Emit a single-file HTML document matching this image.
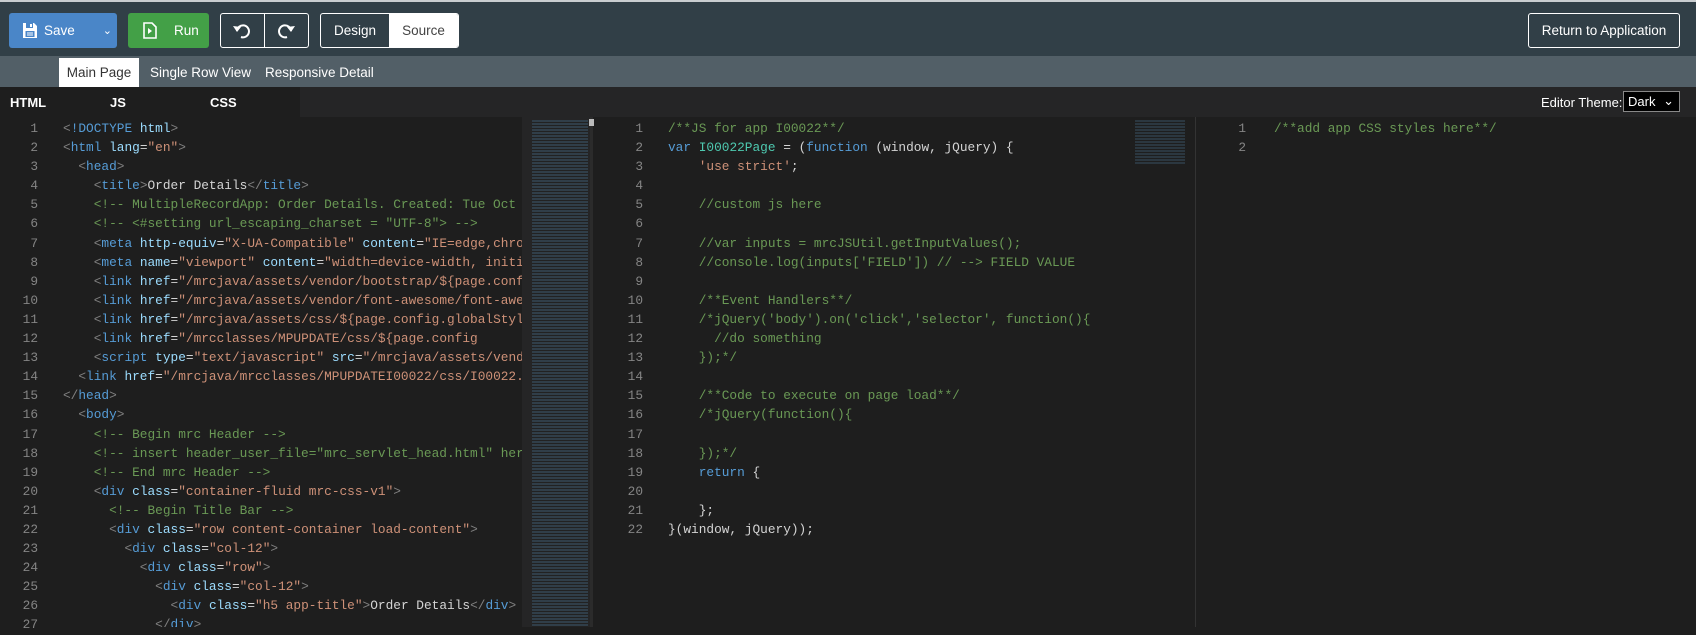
<!DOCTYPE html>
<html><head><style>
*{margin:0;padding:0;box-sizing:border-box}
body{width:1696px;height:627px;overflow:hidden;background:#1e1e1e;font-family:"Liberation Sans",sans-serif;position:relative}
.top{position:absolute;left:0;top:0;width:1696px;height:56px;background:#313f47;border-top:2px solid #c9cdd0}
.btn{position:absolute;top:11px;height:35px;border-radius:3px;color:#fff;font-size:13.5px;display:flex;align-items:center}
.tabs{position:absolute;left:0;top:56px;width:1696px;height:31px;background:#525f67}
.tab{position:absolute;top:2px;height:29px;line-height:29px;font-size:13.5px;color:#fff}
.eh{position:absolute;left:0;top:87px;width:1696px;height:30px;background:#252526}
.code{position:absolute;font-family:"Liberation Mono",monospace;font-size:12.8px;line-height:19.1px;white-space:pre;color:#d4d4d4}
.ln{position:absolute;font-family:"Liberation Mono",monospace;font-size:12.8px;line-height:19.1px;white-space:pre;color:#858585;text-align:right}
.c{color:#6a9955}.t{color:#569cd6}.a{color:#9cdcfe}.s{color:#ce9178}.g{color:#808080}.k{color:#569cd6}.y{color:#4ec9b0}
.mm{position:absolute;background:repeating-linear-gradient(180deg,#3e5d74 0 2px,#1e1e1e 2px 3px)}
</style></head><body>
<div class="top">
 <div class="btn" style="left:9px;width:108px;background:#4a86c8;padding-left:13px">
  <svg width="16" height="17" viewBox="0 0 16 17"><path d="M1 1h11l3 3v12H1z" fill="#fff"/><rect x="4" y="1" width="7" height="5" fill="#4a86c8"/><rect x="8" y="2" width="2" height="3" fill="#fff"/><rect x="3.5" y="9" width="9" height="6" fill="#4a86c8"/><path d="M5 11h6M5 13h6" stroke="#fff"/></svg>
  <span style="margin-left:6px">Save</span><span style="margin-left:28px;font-size:11px">&#8964;</span></div>
 <div class="btn" style="left:128px;width:81px;background:#43a047;padding-left:15px">
  <svg width="14" height="17" viewBox="0 0 14 17"><path d="M1 1h8l4 4v11H1z" fill="none" stroke="#fff" stroke-width="1.6"/><path d="M5 6l4 3-4 3z" fill="#fff"/></svg>
  <span style="margin-left:17px">Run</span></div>
 <div class="btn" style="left:220px;width:89px;border:1px solid #fff">
  <div style="width:44px;height:100%;border-right:1px solid #fff;display:flex;align-items:center;justify-content:center"><svg width="18" height="16" viewBox="0 0 18 16"><path d="M4 8a6 6 0 1 1 4 6" fill="none" stroke="#fff" stroke-width="2"/><path d="M0 3l4 6 4-5z" fill="#fff"/></svg></div>
  <div style="width:44px;display:flex;justify-content:center"><svg width="18" height="16" viewBox="0 0 18 16"><path d="M14 8a6 6 0 1 0-4 6" fill="none" stroke="#fff" stroke-width="2"/><path d="M18 3l-4 6-4-5z" fill="#fff"/></svg></div></div>
 <div class="btn" style="left:320px;width:139px;border:1px solid #fff;overflow:hidden">
  <div style="width:68px;text-align:center">Design</div><div style="flex:1;height:100%;background:#fff;color:#444;display:flex;align-items:center;justify-content:center">Source</div></div>
 <div class="btn" style="left:1528px;width:152px;border:1px solid #fff;justify-content:center">Return to Application</div>
</div>
<div class="tabs">
 <div class="tab" style="left:59px;width:80px;background:#fff;color:#333;text-align:center">Main Page</div>
 <div class="tab" style="left:150px">Single Row View</div>
 <div class="tab" style="left:265px">Responsive Detail</div>
</div>
<div class="eh">
 <div style="position:absolute;left:0;top:0;width:300px;height:30px;background:#1e1e1e"></div>
 <div style="position:absolute;left:10px;top:8px;color:#fff;font-size:13px;font-weight:bold">HTML</div>
 <div style="position:absolute;left:110px;top:8px;color:#fff;font-size:13px;font-weight:bold">JS</div>
 <div style="position:absolute;left:210px;top:8px;color:#fff;font-size:13px;font-weight:bold">CSS</div>
 <div style="position:absolute;left:1541px;top:8px;color:#fff;font-size:13px">Editor Theme:</div>
 <div style="position:absolute;left:1623px;top:4px;width:57px;height:21px;background:#000;border:1px solid #888;color:#fff;font-size:13px;padding:2px 4px">Dark <span style="position:absolute;right:5px;top:1px">&#8964;</span></div>
</div>
<div style="position:absolute;left:522px;top:117px;width:68px;height:510px;background:#252526"></div>
<div class="mm" style="left:532px;top:120px;width:56px;height:507px;opacity:.45"></div>
<div style="position:absolute;left:590px;top:117px;width:3px;height:510px;background:#2b2b2b"></div>
<div style="position:absolute;left:589px;top:119px;width:5px;height:7px;background:#bbb"></div>
<div style="position:absolute;left:1195px;top:117px;width:1px;height:510px;background:#333"></div>
<div class="ln" style="left:10px;top:119px;width:28px">1
2
3
4
5
6
7
8
9
10
11
12
13
14
15
16
17
18
19
20
21
22
23
24
25
26
27</div>
<div class="code" style="left:63px;top:119px;width:459px;overflow:hidden;height:508px"><span class="g">&lt;</span><span class="t">!DOCTYPE</span> <span class="a">html</span><span class="g">&gt;</span>
<span class="g">&lt;</span><span class="t">html</span> <span class="a">lang</span>=<span class="s">"en"</span><span class="g">&gt;</span>
  <span class="g">&lt;</span><span class="t">head</span><span class="g">&gt;</span>
    <span class="g">&lt;</span><span class="t">title</span><span class="g">&gt;</span>Order Details<span class="g">&lt;/</span><span class="t">title</span><span class="g">&gt;</span>
    <span class="c">&lt;!-- MultipleRecordApp: Order Details. Created: Tue Oct</span>
    <span class="c">&lt;!-- &lt;#setting url_escaping_charset = "UTF-8"&gt; --&gt;</span>
    <span class="g">&lt;</span><span class="t">meta</span> <span class="a">http-equiv</span>=<span class="s">"X-UA-Compatible"</span> <span class="a">content</span>=<span class="s">"IE=edge,chrome=1"</span>
    <span class="g">&lt;</span><span class="t">meta</span> <span class="a">name</span>=<span class="s">"viewport"</span> <span class="a">content</span>=<span class="s">"width=device-width, initial</span>
    <span class="g">&lt;</span><span class="t">link</span> <span class="a">href</span>=<span class="s">"/mrcjava/assets/vendor/bootstrap/${page.config</span>
    <span class="g">&lt;</span><span class="t">link</span> <span class="a">href</span>=<span class="s">"/mrcjava/assets/vendor/font-awesome/font-awesome</span>
    <span class="g">&lt;</span><span class="t">link</span> <span class="a">href</span>=<span class="s">"/mrcjava/assets/css/${page.config.globalStyle</span>
    <span class="g">&lt;</span><span class="t">link</span> <span class="a">href</span>=<span class="s">"/mrcclasses/MPUPDATE/css/${page.config</span>
    <span class="g">&lt;</span><span class="t">script</span> <span class="a">type</span>=<span class="s">"text/javascript"</span> <span class="a">src</span>=<span class="s">"/mrcjava/assets/vendor</span>
  <span class="g">&lt;</span><span class="t">link</span> <span class="a">href</span>=<span class="s">"/mrcjava/mrcclasses/MPUPDATEI00022/css/I00022.css</span>
<span class="g">&lt;/</span><span class="t">head</span><span class="g">&gt;</span>
  <span class="g">&lt;</span><span class="t">body</span><span class="g">&gt;</span>
    <span class="c">&lt;!-- Begin mrc Header --&gt;</span>
    <span class="c">&lt;!-- insert header_user_file="mrc_servlet_head.html" here</span>
    <span class="c">&lt;!-- End mrc Header --&gt;</span>
    <span class="g">&lt;</span><span class="t">div</span> <span class="a">class</span>=<span class="s">"container-fluid mrc-css-v1"</span><span class="g">&gt;</span>
      <span class="c">&lt;!-- Begin Title Bar --&gt;</span>
      <span class="g">&lt;</span><span class="t">div</span> <span class="a">class</span>=<span class="s">"row content-container load-content"</span><span class="g">&gt;</span>
        <span class="g">&lt;</span><span class="t">div</span> <span class="a">class</span>=<span class="s">"col-12"</span><span class="g">&gt;</span>
          <span class="g">&lt;</span><span class="t">div</span> <span class="a">class</span>=<span class="s">"row"</span><span class="g">&gt;</span>
            <span class="g">&lt;</span><span class="t">div</span> <span class="a">class</span>=<span class="s">"col-12"</span><span class="g">&gt;</span>
              <span class="g">&lt;</span><span class="t">div</span> <span class="a">class</span>=<span class="s">"h5 app-title"</span><span class="g">&gt;</span>Order Details<span class="g">&lt;/</span><span class="t">div</span><span class="g">&gt;</span>
            <span class="g">&lt;/</span><span class="t">div</span><span class="g">&gt;</span></div>
<div class="ln" style="left:620px;top:119px;width:23px">1
2
3
4
5
6
7
8
9
10
11
12
13
14
15
16
17
18
19
20
21
22</div>
<div class="code" style="left:668px;top:119px"><span class="c">/**JS for app I00022**/</span>
<span class="k">var</span> <span class="y">I00022Page</span> = (<span class="k">function</span> (window, jQuery) {
    <span class="s">'use strict'</span>;

    <span class="c">//custom js here</span>

    <span class="c">//var inputs = mrcJSUtil.getInputValues();</span>
    <span class="c">//console.log(inputs['FIELD']) // --&gt; FIELD VALUE</span>

    <span class="c">/**Event Handlers**/</span>
    <span class="c">/*jQuery('body').on('click','selector', function(){</span>
    <span class="c">  //do something</span>
    <span class="c">});*/</span>

    <span class="c">/**Code to execute on page load**/</span>
    <span class="c">/*jQuery(function(){</span>

    <span class="c">});*/</span>
    <span class="k">return</span> {

    };
}(window, jQuery));</div>
<div class="mm" style="left:1135px;top:120px;width:50px;height:45px;opacity:.4"></div>
<div class="ln" style="left:1226px;top:119px;width:20px">1
2</div>
<div class="code" style="left:1274px;top:119px"><span class="c">/**add app CSS styles here**/</span></div>
</body></html>
